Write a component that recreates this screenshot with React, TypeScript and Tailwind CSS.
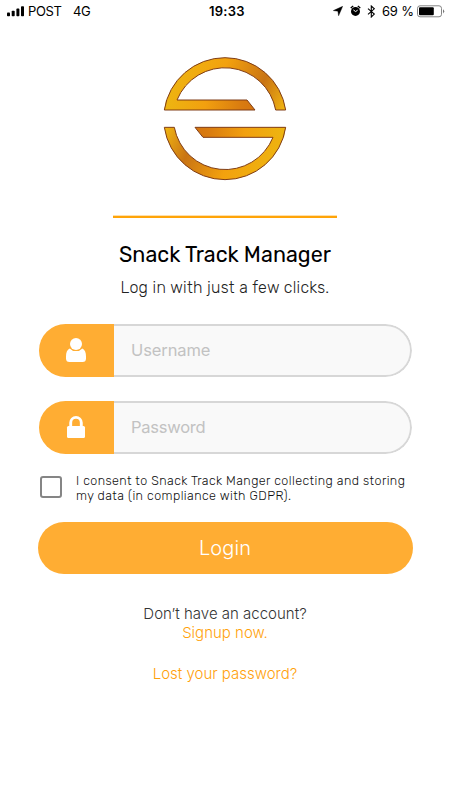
import React from "react";

function StatusBar() {
  return (
    <header className="flex h-[22px] w-full items-center font-['Inter',sans-serif] text-[13px] leading-[22px] text-black">
      <div className="flex w-[209px] items-center pl-[7px]">
        <svg width="18" height="11" viewBox="0 0 18 11" className="mr-[3px]">
          <rect x="0" y="6.5" width="3" height="3.8" rx="0.8" />
          <rect x="4.7" y="4.7" width="3" height="5.6" rx="0.8" />
          <rect x="9.4" y="2.6" width="3" height="7.7" rx="0.8" />
          <rect x="14" y="0.3" width="3" height="10" rx="0.8" />
        </svg>
        <span className="w-[45px] tracking-[-0.35px]">POST</span>
        <span className="tracking-[-0.3px]">4G</span>
      </div>
      <span className="w-[124px] font-semibold tracking-[0.25px]">19:33</span>
      <svg width="10" height="10" viewBox="0 0 10 10" className="mr-[7px]">
        <path d="M9.7 0.3 5.6 9.8 4.9 5.2 0.3 4.6Z" stroke="black" strokeWidth="0.4" />
      </svg>
      <svg width="11" height="12" viewBox="0 0 11 12" className="mr-[6px]">
        <circle cx="5.5" cy="6.4" r="4.5" />
        <path d="M0.7 3.1 3.2 1.1M10.3 3.1 7.8 1.1" stroke="black" strokeWidth="1.3" />
        <path d="M3.4 4.9 5.6 6.6 7.7 5.1" fill="none" stroke="white" strokeWidth="1" />
      </svg>
      <svg width="9" height="13" viewBox="0 0 9 13" className="mr-[6px]">
        <path d="M1 3.6 7.3 9.1 4.3 12V1L7.3 3.8 1 9.4" fill="none" stroke="black" strokeWidth="1.1" />
      </svg>
      <span className="w-[34.5px] whitespace-nowrap tracking-[-0.2px]">69 %</span>
      <svg width="28" height="13" viewBox="0 0 28 13">
        <rect x="0.5" y="0.8" width="24" height="11" rx="2.5" fill="white" stroke="#777" strokeWidth="0.9" />
        <rect x="2" y="2.3" width="14.8" height="8" rx="1" />
        <path d="M26 4.2Q28.4 6.3 26 8.4Z" fill="#777" />
      </svg>
    </header>
  );
}

function Logo() {
  return (
    <svg width="140" height="140" viewBox="0 0 420 420" className="mt-[28px]">
      <defs>
        <linearGradient id="arc" gradientUnits="userSpaceOnUse" x1="60" y1="30" x2="392" y2="180">
          <stop offset="0" stopColor="#edb611" />
          <stop offset="0.4" stopColor="#f3a10e" />
          <stop offset="0.74" stopColor="#c97414" />
          <stop offset="1" stopColor="#f2b711" />
        </linearGradient>
        <linearGradient id="bar" gradientUnits="userSpaceOnUse" x1="28" y1="0" x2="300" y2="0">
          <stop offset="0" stopColor="#edb611" />
          <stop offset="0.45" stopColor="#f2a00f" />
          <stop offset="0.85" stopColor="#d97b10" />
          <stop offset="1" stopColor="#d4740f" />
        </linearGradient>
        <g id="half">
          <path d="M28 180A184 184 0 0 1 392 180H362A155 155 0 0 0 66 150L60 180Z" fill="url(#arc)" />
          <path d="M28 180L33 150H276L300 180Z" fill="url(#bar)" />
          <path
            d="M28 180A184 184 0 0 1 392 180H362A155 155 0 0 0 66 150H276L300 180Z"
            fill="none"
            stroke="#803d16"
            strokeWidth="3"
            strokeLinejoin="round"
          />
        </g>
      </defs>
      <use href="#half" />
      <use href="#half" transform="rotate(180 210 206)" />
    </svg>
  );
}

function UserIcon() {
  return (
    <svg width="22" height="26" viewBox="0 0 22 26" fill="white" className="-mt-[1px]">
      <circle cx="11" cy="7" r="6" />
      <path d="M4.7 11.4C2 12.5 1 15.3 1 19.5V21.5Q1 25 4.5 25H17.5Q21 25 21 21.5V19.5C21 15.3 20 12.5 17.3 11.4Q15 14.1 11 14.1T4.7 11.4Z" />
    </svg>
  );
}

function LockIcon() {
  return (
    <svg width="22" height="24" viewBox="0 0 22 24" className="-mt-[2px]">
      <path d="M5.7 12V7.7a5.3 5.3 0 0 1 10.6 0V12" fill="none" stroke="white" strokeWidth="2.9" />
      <rect x="2" y="11" width="18" height="12" rx="1.5" fill="white" />
    </svg>
  );
}

function Field({ icon, label, type, tracking }: { icon: React.ReactNode; label: string; type: string; tracking: string }) {
  return (
    <label className="flex h-[53px] w-[373px] overflow-hidden rounded-full">
      <span className="flex w-[75px] shrink-0 items-center justify-center bg-[#ffad33]">{icon}</span>
      <input
        type={type}
        placeholder={label}
        className={`min-w-0 flex-1 rounded-r-full border-2 border-l-0 border-[#d7d7d7] bg-[#f9f9f9] pl-[17.5px] font-['Inter',sans-serif] text-[16.5px] font-normal outline-none placeholder:text-[#c2c2c2] ${tracking}`}
      />
    </label>
  );
}

export default function App() {
  return (
    <main className="flex h-[800px] w-[450px] flex-col items-center overflow-hidden bg-white font-['Rubik','Roboto',sans-serif]">
      <StatusBar />
      <Logo />
      <hr className="mt-[25px] h-[3px] w-[224px] border-0 border-t border-[#ffe0aa] bg-[#ffa408]" />
      <h1 className="mt-[22px] h-[30px] whitespace-nowrap text-[21.5px] font-normal leading-[30px] tracking-[0.05px] text-black">Snack Track Manager</h1>
      <p className="mt-[6px] h-[23px] whitespace-nowrap text-[16px] font-light leading-[24px] tracking-[0.28px] text-[#222]">Log in with just a few clicks.</p>
      <form className="mt-[25px] flex flex-col items-center" onSubmit={(e) => e.preventDefault()}>
        <Field icon={<UserIcon />} label="Username" type="text" tracking="tracking-[-0.1px]" />
        <div className="h-[24px]" />
        <Field icon={<LockIcon />} label="Password" type="password" tracking="tracking-[-0.25px]" />
        <label className="mt-[19px] flex h-[31px] w-[370px] items-start">
          <input type="checkbox" className="mt-[3px] size-[22px] shrink-0 appearance-none rounded-[3px] border-2 border-[#858585] bg-white" />
          <span className="ml-[14px] whitespace-nowrap text-[12.5px] font-light leading-[15px] tracking-[0.42px] text-[#111]">
            I consent to Snack Track Manger collecting and storing
            <br />
            my data (in compliance with GDPR).
          </span>
        </label>
        <button className="mt-[18px] h-[52px] w-[375px] rounded-full bg-[#ffad33] font-['Inter',sans-serif] text-[20px] font-light leading-[52px] tracking-[0.1px] text-white">Login</button>
      </form>
      <p className="mt-[30px] h-[19px] whitespace-nowrap font-['Inter',sans-serif] text-[15px] font-light leading-[19px] text-[#333]">Don’t have an account?</p>
      <a className="h-[19px] whitespace-nowrap font-['Inter',sans-serif] text-[15px] font-light leading-[19px] text-[#ffa10a]">Signup now.</a>
      <a className="mt-[22px] h-[20px] whitespace-nowrap font-['Inter',sans-serif] text-[15px] font-light leading-[20px] text-[#ffa10a]">Lost your password?</a>
    </main>
  );
}
